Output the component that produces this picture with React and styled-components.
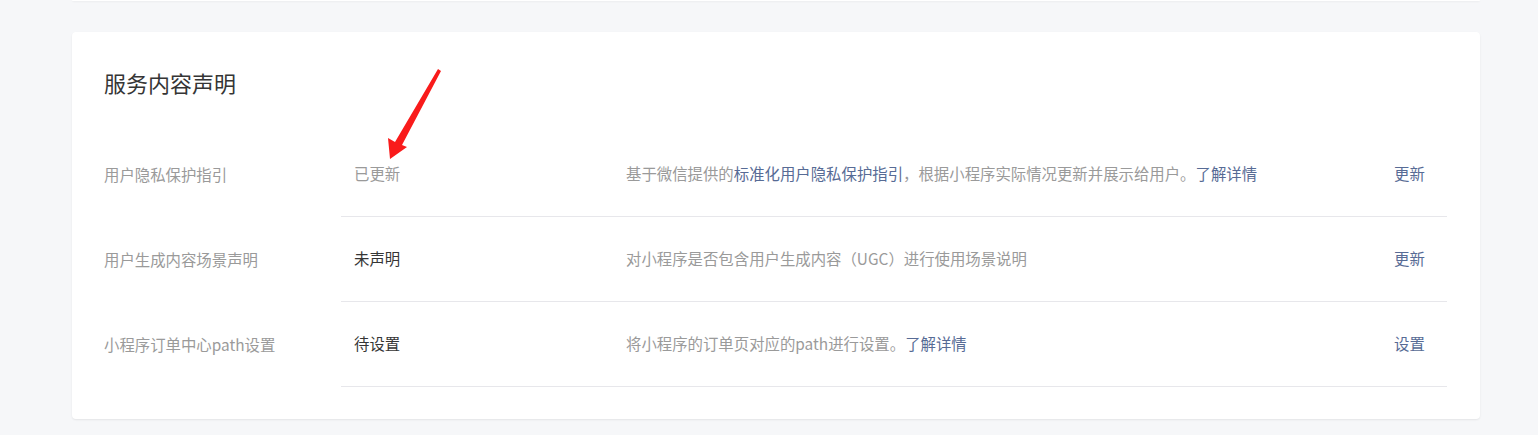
import React from "react";
import styled, { createGlobalStyle } from "styled-components";

const GlobalStyle = createGlobalStyle`
  html, body { margin: 0; padding: 0; background: #f6f7f9; }
  body { font-family: "Noto Sans CJK SC", "Noto Sans", sans-serif; }
`;

const Page = styled.div`
  display: flex;
  flex-direction: column;
  gap: 31px;
  padding: 0 58px 20px 72px;
`;

const PrevCard = styled.div`
  height: 1px;
  background: #fff;
  border-radius: 0 0 4px 4px;
  box-shadow: 0 1px 2px rgba(0, 0, 0, 0.06);
`;

const Card = styled.section`
  position: relative;
  background: #fff;
  border-radius: 4px;
  box-shadow: 0 1px 2px rgba(0, 0, 0, 0.08);
  padding: 36px 33px 32px 32px;
`;

const Title = styled.h2`
  margin: 0 0 36px;
  font-size: 22px;
  line-height: 28px;
  font-weight: 400;
  color: #353535;
`;

const Row = styled.div`
  display: flex;
  align-items: stretch;
  height: 85px;
  font-size: 15.4px;
`;

const Label = styled.div`
  width: 237px;
  flex: none;
  display: flex;
  align-items: center;
  padding-bottom: 2px;
  color: #9a9a9a;
`;

const Content = styled.div`
  flex: 1;
  display: flex;
  align-items: center;
  padding-bottom: 2px;
  border-bottom: 1px solid #e7e7eb;
`;

const Status = styled.div`
  width: 285px;
  box-sizing: border-box;
  padding-left: 13px;
  flex: none;
  color: ${(p) => (p.$done ? "#9a9a9a" : "#353535")};
`;

const Desc = styled.div`
  flex: 1;
  color: #9a9a9a;
`;

const Link = styled.a`
  color: #576b95;
  text-decoration: none;
  cursor: pointer;
`;

const Action = styled(Link)`
  width: 53px;
  flex: none;
`;

const Arrow = styled.svg`
  position: absolute;
  left: 308px;
  top: 32px;
  width: 140px;
  height: 135px;
  pointer-events: none;
`;

const rows = [
  {
    label: "用户隐私保护指引",
    status: "已更新",
    done: true,
    desc: (
      <>
        基于微信提供的<Link>标准化用户隐私保护指引</Link>，根据小程序实际情况更新并展示给用户。<Link>了解详情</Link>
      </>
    ),
    action: "更新",
  },
  {
    label: "用户生成内容场景声明",
    status: "未声明",
    desc: "对小程序是否包含用户生成内容（UGC）进行使用场景说明",
    action: "更新",
  },
  {
    label: "小程序订单中心path设置",
    status: "待设置",
    desc: (
      <>
        将小程序的订单页对应的path进行设置。<Link>了解详情</Link>
      </>
    ),
    action: "设置",
  },
];

export default function App() {
  return (
    <>
      <GlobalStyle />
      <Page>
        <PrevCard />
        <Card>
          <Title>服务内容声明</Title>
          {rows.map((r) => (
            <Row key={r.label}>
              <Label>{r.label}</Label>
              <Content>
                <Status $done={r.done}>{r.status}</Status>
                <Desc>{r.desc}</Desc>
                <Action>{r.action}</Action>
              </Content>
            </Row>
          ))}
          <Arrow viewBox="380 64 140 135">
            <polygon
              points="438,69 441,71 402,145 407,147 390,159 388,138 395,142"
              fill="#f91b1b"
            />
          </Arrow>
        </Card>
      </Page>
    </>
  );
}
